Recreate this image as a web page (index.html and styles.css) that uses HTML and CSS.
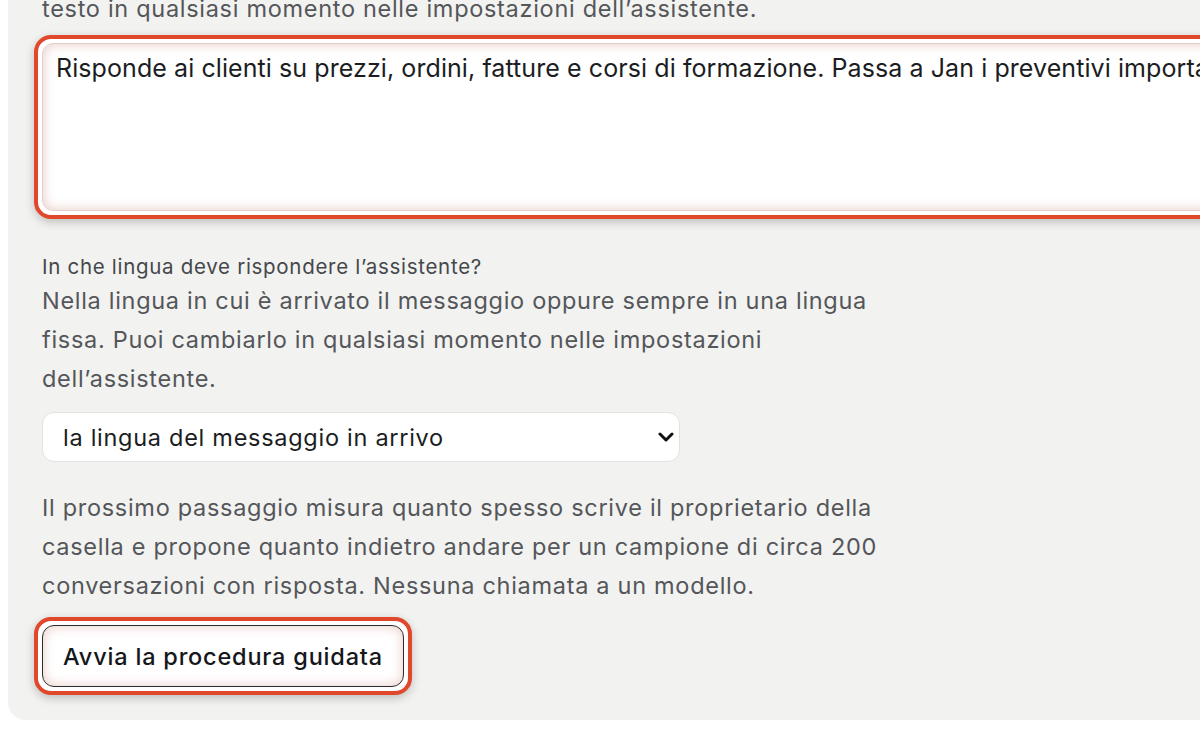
FILE: index.html
```html
<!DOCTYPE html>
<html lang="it">
<head>
<meta charset="utf-8">
<title>Assistente</title>
<link rel="stylesheet" href="styles.css">
</head>
<body>
<div class="panel">
  <p class="para para-top">testo in qualsiasi momento nelle impostazioni dell’assistente.</p>
  <div class="ring ring-area">
    <textarea class="area">Risponde ai clienti su prezzi, ordini, fatture e corsi di formazione. Passa a Jan i preventivi importanti e le richieste di sconto.</textarea>
  </div>
  <label class="label">In che lingua deve rispondere l’assistente?</label>
  <p class="para para-lang">Nella lingua in cui è arrivato il messaggio oppure sempre in una lingua fissa. Puoi cambiarlo in qualsiasi momento nelle impostazioni dell’assistente.</p>
  <div class="select-wrap">
    <select class="select">
      <option>la lingua del messaggio in arrivo</option>
      <option>italiano</option>
      <option>inglese</option>
    </select>
    <svg class="chevron" width="16" height="10" viewBox="0 0 16 10" aria-hidden="true">
      <path d="M2 2 L8 8 L14 2" fill="none" stroke="#111" stroke-width="3" stroke-linecap="round" stroke-linejoin="round"/>
    </svg>
  </div>
  <p class="para para-next">Il prossimo passaggio misura quanto spesso scrive il proprietario della casella e propone quanto indietro andare per un campione di circa 200 conversazioni con risposta. Nessuna chiamata a un modello.</p>
  <div class="ring ring-btn">
    <button class="btn" type="button">Avvia la procedura guidata</button>
  </div>
</div>
</body>
</html>
```
FILE: styles.css
```css
html, body {
  margin: 0;
  padding: 0;
  background: #ffffff;
  overflow: hidden;
}
body {
  width: 1200px;
  height: 750px;
  font-family: Inter, "Noto Sans", sans-serif;
}
.panel {
  margin-left: 8px;
  margin-top: -11px;
  width: 1260px;
  background: #f2f2f0;
  border-radius: 0 0 0 18px;
  padding: 0 0 25px 34px;
  box-sizing: border-box;
  display: flex;
  flex-direction: column;
  align-items: flex-start;
}
.para {
  margin: 0;
  width: 885px;
  font-size: 23.5px;
  line-height: 39px;
  letter-spacing: 0.7px;
  color: #54565a;
}
.para-top {
  width: auto;
  white-space: nowrap;
}
.ring {
  border: 4px solid #e0472b;
  padding: 4px;
  border-radius: 17px;
  background: #ffffff;
  box-shadow: 0 3px 10px rgba(0, 0, 0, 0.22);
  margin-left: -8px;
  display: flex;
}
.ring-area {
  margin-top: 7px;
  width: 1240px;
}
.area {
  flex: 1;
  height: 168px;
  box-sizing: border-box;
  margin: 0;
  border: 1px solid #e3cfcc;
  border-radius: 11px;
  padding: 7px 13px;
  font-family: Inter, "Noto Sans", sans-serif;
  font-size: 25px;
  line-height: 34px;
  letter-spacing: 0.08px;
  color: #1b1d22;
  background: #ffffff;
  box-shadow: inset 0 0 12px rgba(170, 60, 45, 0.28);
  resize: none;
  white-space: nowrap;
  overflow: hidden;
  outline: none;
}
.label {
  margin-top: 34px;
  font-size: 20.5px;
  line-height: 27px;
  letter-spacing: 0.7px;
  color: #45474b;
}
.para-lang {
  margin-top: 1px;
}
.select-wrap {
  position: relative;
  margin-top: 14px;
  display: flex;
}
.select {
  -webkit-appearance: none;
  appearance: none;
  width: 638px;
  height: 50px;
  border: 1px solid #e2e2df;
  border-radius: 12px;
  background: #ffffff;
  padding: 0 40px 0 20px;
  font-family: Inter, "Noto Sans", sans-serif;
  font-size: 23.5px;
  letter-spacing: 0.72px;
  color: #1b1d22;
}
.chevron {
  position: absolute;
  left: 616px;
  top: 20px;
  pointer-events: none;
}
.para-next {
  margin-top: 26px;
}
.ring-btn {
  margin-top: 12px;
}
.btn {
  height: 62px;
  padding: 0 20px;
  border: 1px solid #2b2b2b;
  border-radius: 12px;
  background: #ffffff;
  box-shadow: inset 0 0 12px rgba(170, 60, 45, 0.28);
  font-family: Inter, "Noto Sans", sans-serif;
  font-size: 23.5px;
  font-weight: 500;
  letter-spacing: 0.8px;
  color: #15171b;
}
```
